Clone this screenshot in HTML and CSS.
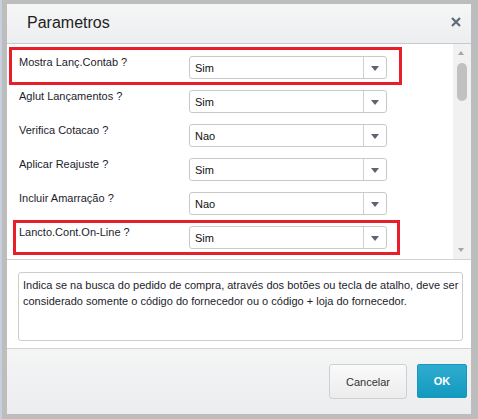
FILE: index.html
```html
<!DOCTYPE html>
<html lang="pt">
<head>
<meta charset="utf-8">
<title>Parametros</title>
<link rel="stylesheet" href="styles.css">
</head>
<body>
<div class="dialog">
  <div class="header">
    <span class="title">Parametros</span>
    <span class="close"><svg width="10" height="10" viewBox="0 0 10 10"><path d="M1 1L9 9M9 1L1 9" stroke="#5f6b77" stroke-width="2.2" stroke-linecap="butt"/></svg></span>
  </div>
  <div class="list">
    <div class="rows">
      <div class="row"><span class="label">Mostra Lanç.Contab ?</span><div class="select"><span class="value">Sim</span><span class="arrow"></span></div></div>
      <div class="row"><span class="label">Aglut Lançamentos ?</span><div class="select"><span class="value">Sim</span><span class="arrow"></span></div></div>
      <div class="row"><span class="label">Verifica Cotacao ?</span><div class="select"><span class="value">Nao</span><span class="arrow"></span></div></div>
      <div class="row"><span class="label">Aplicar Reajuste ?</span><div class="select"><span class="value">Sim</span><span class="arrow"></span></div></div>
      <div class="row"><span class="label">Incluir Amarração ?</span><div class="select"><span class="value">Nao</span><span class="arrow"></span></div></div>
      <div class="row"><span class="label">Lancto.Cont.On-Line ?</span><div class="select"><span class="value">Sim</span><span class="arrow"></span></div></div>
    </div>
    <div class="scrollbar">
      <span class="sb-up"></span>
      <span class="sb-thumb"></span>
      <span class="sb-down"></span>
    </div>
  </div>
  <div class="desc">
    <div class="desc-box">Indica se na busca do pedido de compra, através dos botões ou tecla de atalho, deve ser<br>considerado somente o código do fornecedor ou o código + loja do fornecedor.</div>
  </div>
  <div class="footer">
    <button class="btn cancel">Cancelar</button>
    <button class="btn ok">OK</button>
  </div>
</div>
<div class="mark mark1"></div>
<div class="mark mark2"></div>
</body>
</html>
```

FILE: styles.css
```css
html, body {
  margin: 0;
  padding: 0;
}
body {
  width: 478px;
  height: 419px;
  box-sizing: border-box;
  padding: 4px 7px 5px 7px;
  background: linear-gradient(to right, #c6d0de 0, #c6d0de 2px, #bdbdbd 2px);
  font-family: "Liberation Sans", Arial, sans-serif;
  position: relative;
  overflow: hidden;
}
.dialog {
  width: 464px;
  height: 410px;
  background: #fff;
  display: flex;
  flex-direction: column;
}
.header {
  height: 39px;
  border-bottom: 1px solid #c8c9cb;
  background: linear-gradient(to bottom, #f5f6f6, #eceef0);
  display: flex;
  align-items: center;
  justify-content: space-between;
  padding: 0 10px 0 20px;
  flex: none;
}
.title {
  font-size: 16px;
  color: #1e1e1e;
  margin-top: -1px;
}
.close {
  display: flex;
  margin-top: -4px;
}
.list {
  height: 215px;
  border-bottom: 1px solid #d3d3d3;
  display: flex;
  flex: none;
}
.rows {
  flex: 1;
  padding: 12px 0 0 12px;
}
.row {
  height: 34px;
  display: flex;
  align-items: flex-start;
}
.label {
  width: 170px;
  font-size: 11px;
  line-height: 13px;
  color: #1c1c2c;
}
.select {
  width: 198px;
  height: 23px;
  box-sizing: border-box;
  border: 1px solid #c9c9c9;
  border-radius: 3px;
  display: flex;
  align-items: center;
  background: #fff;
}
.value {
  flex: 1;
  padding-left: 5px;
  font-size: 11px;
  color: #111;
}
.arrow {
  width: 22px;
  height: 100%;
  border-left: 1px solid #d0d0d0;
  display: flex;
  align-items: center;
  justify-content: center;
}
.arrow::after {
  content: "";
  border-left: 4px solid transparent;
  border-right: 4px solid transparent;
  border-top: 5px solid #5b6470;
  margin-top: 1px;
}
.scrollbar {
  width: 18px;
  background: #f1f1f1;
  position: relative;
  flex: none;
}
.sb-up, .sb-down {
  position: absolute;
  left: 5px;
  width: 0;
  height: 0;
  border-left: 3.5px solid transparent;
  border-right: 3.5px solid transparent;
}
.sb-up {
  top: 7px;
  border-bottom: 4px solid #a6a6a6;
}
.sb-down {
  bottom: 7px;
  border-top: 4px solid #a6a6a6;
}
.sb-thumb {
  position: absolute;
  left: 4px;
  top: 19px;
  width: 10px;
  height: 38px;
  border-radius: 5px;
  background: #c1c1c1;
}
.desc {
  height: 88px;
  padding: 12px 8px 0 11px;
  box-sizing: border-box;
  flex: none;
}
.desc-box {
  height: 69px;
  box-sizing: border-box;
  border: 1px solid #cdcdcd;
  border-radius: 3px;
  padding: 4px 4px;
  font-size: 11px;
  line-height: 16px;
  color: #1c1c2c;
  white-space: nowrap;
}
.footer {
  flex: 1;
  border-top: 1px solid #d3d3d3;
  background: linear-gradient(to bottom, #f4f5f5, #ebedef);
  display: flex;
  justify-content: flex-end;
  align-items: flex-start;
  padding: 15px 4px 0 0;
  gap: 10px;
}
.btn {
  font-family: "Liberation Sans", Arial, sans-serif;
  font-size: 11px;
  height: 35px;
  border-radius: 3px;
  cursor: pointer;
  padding: 0;
}
.cancel {
  width: 78px;
  border: 1px solid #cfcfcf;
  background: linear-gradient(to bottom, #fafafa, #ececec);
  color: #333;
}
.ok {
  width: 50px;
  height: 34px;
  border: 1px solid #1797bb;
  background: linear-gradient(to bottom, #2eaccf, #139ac0);
  color: #fff;
  font-weight: bold;
  border-radius: 2px;
}
.mark {
  position: absolute;
  border: 3px solid #e81f29;
  box-sizing: border-box;
}
.mark1 {
  left: 9px;
  top: 47px;
  width: 393px;
  height: 38px;
}
.mark2 {
  left: 13px;
  top: 220px;
  width: 387px;
  height: 35px;
}
```
